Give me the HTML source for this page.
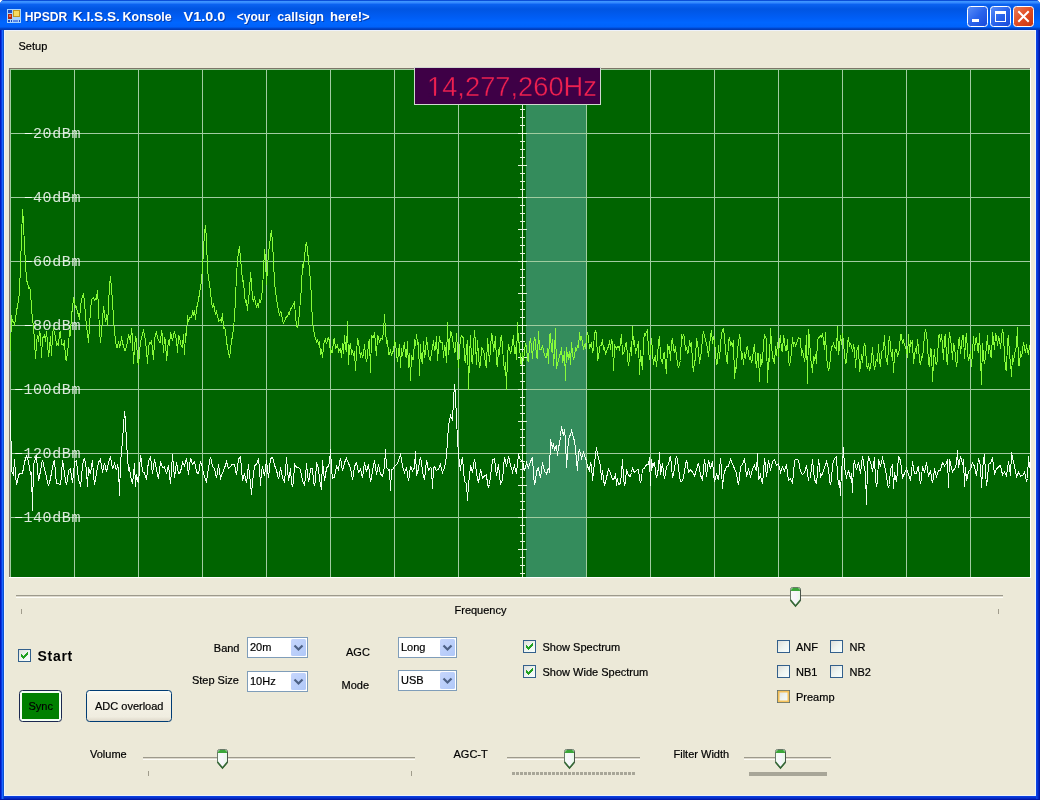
<!DOCTYPE html>
<html><head><meta charset="utf-8"><style>
html,body{margin:0;padding:0;background:#fff;overflow:hidden;width:1040px;height:800px}
svg{display:block;will-change:transform}
text{font-family:"Liberation Sans",sans-serif}
.t{font-size:11px;fill:#000;stroke:#000;stroke-width:0.2px}
.mono{font-family:"Liberation Mono",monospace;font-size:15px;letter-spacing:0.6px;fill:#ffffff;fill-opacity:0.85}
</style></head><body>
<svg width="1040" height="800" viewBox="0 0 1040 800"><g>
<defs>
<linearGradient id="title" x1="0" y1="0" x2="0" y2="30" gradientUnits="userSpaceOnUse">
<stop offset="0" stop-color="#0a4ed8"/>
<stop offset="0.033" stop-color="#0a4ed8"/>
<stop offset="0.05" stop-color="#3d95ff"/>
<stop offset="0.09" stop-color="#3488ff"/>
<stop offset="0.15" stop-color="#0a62f0"/>
<stop offset="0.3" stop-color="#0055e2"/>
<stop offset="0.6" stop-color="#005ef6"/>
<stop offset="0.75" stop-color="#0066ff"/>
<stop offset="0.9" stop-color="#0062fa"/>
<stop offset="0.94" stop-color="#0048d0"/>
<stop offset="1" stop-color="#0038b0"/>
</linearGradient>
<linearGradient id="cbfill" x1="0" y1="0" x2="1" y2="1">
<stop offset="0" stop-color="#dcdcd6"/><stop offset="0.5" stop-color="#eef4f0"/><stop offset="1" stop-color="#f8ffff"/>
</linearGradient>
<linearGradient id="cbtn" x1="0" y1="0" x2="1" y2="1">
<stop offset="0" stop-color="#c6d6fc"/><stop offset="1" stop-color="#b0c8f8"/>
</linearGradient>
<linearGradient id="thumb" x1="0" y1="0" x2="1" y2="0">
<stop offset="0" stop-color="#f4fff4"/><stop offset="0.5" stop-color="#f8f4fc"/><stop offset="1" stop-color="#e4fce4"/>
</linearGradient>
<linearGradient id="btn" x1="0" y1="0" x2="0" y2="1">
<stop offset="0" stop-color="#fdfdf8"/><stop offset="0.15" stop-color="#f6f4ea"/><stop offset="0.85" stop-color="#f0ede0"/><stop offset="1" stop-color="#dcd6c8"/>
</linearGradient>
<linearGradient id="capb" x1="0" y1="0" x2="1" y2="1">
<stop offset="0" stop-color="#5c8ff8"/><stop offset="0.5" stop-color="#2a64ec"/><stop offset="1" stop-color="#1848d8"/>
</linearGradient>
<linearGradient id="capc" x1="0" y1="0" x2="1" y2="1">
<stop offset="0" stop-color="#e8805e"/><stop offset="0.5" stop-color="#e24c22"/><stop offset="1" stop-color="#c83410"/>
</linearGradient>
</defs>
<!-- frame -->
<path d="M0,5 Q0,0 5,0 H1035 Q1040,0 1040,5 V800 H0 Z" fill="#0836d8"/>
<rect x="0" y="30" width="1" height="770" fill="#0018c0"/>
<rect x="1" y="30" width="1" height="770" fill="#0a3ae0"/>
<rect x="2" y="30" width="1" height="770" fill="#1a66ff"/>
<rect x="3" y="30" width="1" height="770" fill="#0c52d0"/>
<rect x="1039" y="30" width="1" height="770" fill="#0018a8"/>
<rect x="1038" y="30" width="1" height="770" fill="#0428c0"/>
<rect x="1037" y="30" width="1" height="770" fill="#0838d8"/>
<rect x="1036" y="30" width="1" height="770" fill="#0a44e4"/>
<rect x="4" y="796" width="1032" height="1" fill="#0a40e0"/>
<rect x="4" y="797" width="1032" height="1" fill="#0834d0"/>
<rect x="4" y="798" width="1032" height="1" fill="#0428c0"/>
<rect x="0" y="799" width="1040" height="1" fill="#0018a8"/>
<path d="M0,5 Q0,0 5,0 H1035 Q1040,0 1040,5 V30 H0 Z" fill="url(#title)"/>
<!-- client -->
<rect x="4" y="30" width="1032" height="766" fill="#eef2fb"/>
<rect x="5" y="31" width="1030" height="764" fill="#ece9d8"/>
<!-- icon -->
<rect x="7" y="9" width="14" height="14" fill="#a8d4fc"/>
<rect x="8" y="10" width="4" height="3" fill="#1a50c8"/>
<rect x="8" y="14" width="4" height="5" fill="#b02810"/>
<rect x="9" y="15" width="2" height="2" fill="#f06848"/>
<rect x="13" y="10" width="7" height="7" fill="#c09820"/>
<rect x="14" y="11" width="5" height="5" fill="#f6dc60"/>
<rect x="8" y="20" width="2" height="2" fill="#1a4ac0"/>
<rect x="11" y="20" width="1" height="2" fill="#1a4ac0"/>
<rect x="13" y="20" width="5" height="2" fill="#5a88e8"/>
<rect x="19" y="20" width="1" height="2" fill="#1a4ac0"/>
<!-- title text -->
<text x="25.85" y="22" font-size="12.5" font-weight="bold" fill="#0a1e70" fill-opacity="0.55" textLength="42.5" lengthAdjust="spacingAndGlyphs">HPSDR</text><text x="73.8" y="22" font-size="12.5" font-weight="bold" fill="#0a1e70" fill-opacity="0.55" textLength="47.1" lengthAdjust="spacingAndGlyphs">K.I.S.S.</text><text x="123.6" y="22" font-size="12.5" font-weight="bold" fill="#0a1e70" fill-opacity="0.55" textLength="49.1" lengthAdjust="spacingAndGlyphs">Konsole</text><text x="184.6" y="22" font-size="12.5" font-weight="bold" fill="#0a1e70" fill-opacity="0.55" textLength="41.8" lengthAdjust="spacingAndGlyphs">V1.0.0</text><text x="237.8" y="22" font-size="12.5" font-weight="bold" fill="#0a1e70" fill-opacity="0.55" textLength="33.1" lengthAdjust="spacingAndGlyphs">&lt;your</text><text x="278.2" y="22" font-size="12.5" font-weight="bold" fill="#0a1e70" fill-opacity="0.55" textLength="46.8" lengthAdjust="spacingAndGlyphs">callsign</text><text x="331" y="22" font-size="12.5" font-weight="bold" fill="#0a1e70" fill-opacity="0.55" textLength="39.8" lengthAdjust="spacingAndGlyphs">here!&gt;</text><text x="24.85" y="21" font-size="12.5" font-weight="bold" fill="#fff" textLength="42.5" lengthAdjust="spacingAndGlyphs">HPSDR</text><text x="72.8" y="21" font-size="12.5" font-weight="bold" fill="#fff" textLength="47.1" lengthAdjust="spacingAndGlyphs">K.I.S.S.</text><text x="122.6" y="21" font-size="12.5" font-weight="bold" fill="#fff" textLength="49.1" lengthAdjust="spacingAndGlyphs">Konsole</text><text x="183.6" y="21" font-size="12.5" font-weight="bold" fill="#fff" textLength="41.8" lengthAdjust="spacingAndGlyphs">V1.0.0</text><text x="236.8" y="21" font-size="12.5" font-weight="bold" fill="#fff" textLength="33.1" lengthAdjust="spacingAndGlyphs">&lt;your</text><text x="277.2" y="21" font-size="12.5" font-weight="bold" fill="#fff" textLength="46.8" lengthAdjust="spacingAndGlyphs">callsign</text><text x="330" y="21" font-size="12.5" font-weight="bold" fill="#fff" textLength="39.8" lengthAdjust="spacingAndGlyphs">here!&gt;</text>
<!-- caption buttons -->
<rect x="967.5" y="6.5" width="20" height="20" rx="3" fill="url(#capb)" stroke="#fff"/>
<rect x="972" y="19" width="7" height="3" fill="#fff"/>
<rect x="990.5" y="6.5" width="20" height="20" rx="3" fill="url(#capb)" stroke="#fff"/>
<rect x="995" y="11" width="11" height="11" fill="none" stroke="#fff" stroke-width="0"/>
<path d="M995,11 h11 v11 h-11 z M996,14 v7 h9 v-7 z" fill="#fff" fill-rule="evenodd"/>
<rect x="1013.5" y="6.5" width="20" height="20" rx="3" fill="url(#capc)" stroke="#fff"/>
<path d="M1019,12 L1028,21 M1028,12 L1019,21" stroke="#fff" stroke-width="2" stroke-linecap="square"/>
<!-- menu -->
<text x="18.5" y="50" class="t">Setup</text>
<!-- spectrum -->
<rect x="9" y="68" width="1022" height="510" fill="#ffffff"/>
<rect x="9" y="68" width="1021" height="509" fill="#7d7668"/>
<rect x="10" y="69" width="1020" height="508" fill="#006400"/>
<rect x="526" y="69" width="60" height="508" fill="#348c5c"/>
<g fill="#a0cca0"><rect x="10" y="69" width="1" height="508"/><rect x="74" y="69" width="1" height="508"/><rect x="138" y="69" width="1" height="508"/><rect x="202" y="69" width="1" height="508"/><rect x="266" y="69" width="1" height="508"/><rect x="330" y="69" width="1" height="508"/><rect x="394" y="69" width="1" height="508"/><rect x="458" y="69" width="1" height="508"/><rect x="522" y="69" width="1" height="508"/><rect x="586" y="69" width="1" height="508"/><rect x="650" y="69" width="1" height="508"/><rect x="714" y="69" width="1" height="508"/><rect x="778" y="69" width="1" height="508"/><rect x="842" y="69" width="1" height="508"/><rect x="906" y="69" width="1" height="508"/><rect x="970" y="69" width="1" height="508"/><rect x="10" y="69" width="1020" height="1"/><rect x="10" y="133" width="1020" height="1"/><rect x="10" y="197" width="1020" height="1"/><rect x="10" y="261" width="1020" height="1"/><rect x="10" y="325" width="1020" height="1"/><rect x="10" y="389" width="1020" height="1"/><rect x="10" y="453" width="1020" height="1"/><rect x="10" y="517" width="1020" height="1"/></g>
<rect x="522" y="69" width="1" height="508" fill="#e4f4dc"/>
<g fill="#e4f4dc"><rect x="518" y="69" width="9" height="1"/><rect x="520" y="77" width="5" height="1"/><rect x="520" y="85" width="5" height="1"/><rect x="520" y="93" width="5" height="1"/><rect x="518" y="101" width="9" height="1"/><rect x="520" y="109" width="5" height="1"/><rect x="520" y="117" width="5" height="1"/><rect x="520" y="125" width="5" height="1"/><rect x="518" y="133" width="9" height="1"/><rect x="520" y="141" width="5" height="1"/><rect x="520" y="149" width="5" height="1"/><rect x="520" y="157" width="5" height="1"/><rect x="518" y="165" width="9" height="1"/><rect x="520" y="173" width="5" height="1"/><rect x="520" y="181" width="5" height="1"/><rect x="520" y="189" width="5" height="1"/><rect x="518" y="197" width="9" height="1"/><rect x="520" y="205" width="5" height="1"/><rect x="520" y="213" width="5" height="1"/><rect x="520" y="221" width="5" height="1"/><rect x="518" y="229" width="9" height="1"/><rect x="520" y="237" width="5" height="1"/><rect x="520" y="245" width="5" height="1"/><rect x="520" y="253" width="5" height="1"/><rect x="518" y="261" width="9" height="1"/><rect x="520" y="269" width="5" height="1"/><rect x="520" y="277" width="5" height="1"/><rect x="520" y="285" width="5" height="1"/><rect x="518" y="293" width="9" height="1"/><rect x="520" y="301" width="5" height="1"/><rect x="520" y="309" width="5" height="1"/><rect x="520" y="317" width="5" height="1"/><rect x="518" y="325" width="9" height="1"/><rect x="520" y="333" width="5" height="1"/><rect x="520" y="341" width="5" height="1"/><rect x="520" y="349" width="5" height="1"/><rect x="518" y="357" width="9" height="1"/><rect x="520" y="365" width="5" height="1"/><rect x="520" y="373" width="5" height="1"/><rect x="520" y="381" width="5" height="1"/><rect x="518" y="389" width="9" height="1"/><rect x="520" y="397" width="5" height="1"/><rect x="520" y="405" width="5" height="1"/><rect x="520" y="413" width="5" height="1"/><rect x="518" y="421" width="9" height="1"/><rect x="520" y="429" width="5" height="1"/><rect x="520" y="437" width="5" height="1"/><rect x="520" y="445" width="5" height="1"/><rect x="518" y="453" width="9" height="1"/><rect x="520" y="461" width="5" height="1"/><rect x="520" y="469" width="5" height="1"/><rect x="520" y="477" width="5" height="1"/><rect x="518" y="485" width="9" height="1"/><rect x="520" y="493" width="5" height="1"/><rect x="520" y="501" width="5" height="1"/><rect x="520" y="509" width="5" height="1"/><rect x="518" y="517" width="9" height="1"/><rect x="520" y="525" width="5" height="1"/><rect x="520" y="533" width="5" height="1"/><rect x="520" y="541" width="5" height="1"/><rect x="518" y="549" width="9" height="1"/><rect x="520" y="557" width="5" height="1"/><rect x="520" y="565" width="5" height="1"/><rect x="520" y="573" width="5" height="1"/></g>
<text x="33.0" y="138" class="mono">20dBm</text><rect x="24.8" y="133" width="7" height="1" fill="#f4fff4"/><text x="33.0" y="202" class="mono">40dBm</text><rect x="24.8" y="197" width="7" height="1" fill="#f4fff4"/><text x="33.0" y="266" class="mono">60dBm</text><rect x="24.8" y="261" width="7" height="1" fill="#f4fff4"/><text x="33.0" y="330" class="mono">80dBm</text><rect x="24.8" y="325" width="7" height="1" fill="#f4fff4"/><text x="23.4" y="394" class="mono">100dBm</text><rect x="15.2" y="389" width="7" height="1" fill="#f4fff4"/><text x="23.4" y="458" class="mono">120dBm</text><rect x="15.2" y="453" width="7" height="1" fill="#f4fff4"/><text x="23.4" y="522" class="mono">140dBm</text><rect x="15.2" y="517" width="7" height="1" fill="#f4fff4"/>
<polyline points="10.5,351.2 11.5,315.3 12.5,321.7 13.5,321.4 14.5,324.2 15.5,319.9 16.5,309.8 17.5,307.4 18.5,298.1 19.5,293.8 20.5,263.1 21.5,239.5 22.5,208.7 23.5,223.6 24.5,246.5 25.5,263.4 26.5,280.8 27.5,281.8 28.5,288.2 29.5,287.4 30.5,290.6 31.5,308.3 32.5,319.0 33.5,327.6 34.5,340.0 35.5,359.0 36.5,343.9 37.5,334.8 38.5,341.5 39.5,331.0 40.5,334.6 41.5,357.5 42.5,338.1 43.5,336.9 44.5,335.1 45.5,341.6 46.5,331.3 47.5,342.7 48.5,357.1 49.5,348.4 50.5,335.6 51.5,356.4 52.5,334.7 53.5,328.4 54.5,334.3 55.5,336.2 56.5,344.8 57.5,343.4 58.5,346.3 59.5,332.8 60.5,331.7 61.5,344.9 62.5,345.0 63.5,345.1 64.5,340.5 65.5,358.9 66.5,359.9 67.5,351.8 68.5,345.3 69.5,330.1 70.5,336.2 71.5,312.7 72.5,310.3 73.5,296.9 74.5,301.9 75.5,307.2 76.5,306.8 77.5,313.4 78.5,313.1 79.5,319.8 80.5,306.1 81.5,299.5 82.5,297.2 83.5,293.6 84.5,302.5 85.5,314.4 86.5,326.8 87.5,332.3 88.5,343.2 89.5,324.9 90.5,310.6 91.5,299.8 92.5,298.7 93.5,297.4 94.5,300.0 95.5,298.7 96.5,299.3 97.5,289.7 98.5,308.2 99.5,330.0 100.5,343.0 101.5,331.0 102.5,320.6 103.5,306.1 104.5,312.8 105.5,322.4 106.5,314.1 107.5,326.4 108.5,304.3 109.5,285.8 110.5,276.3 111.5,290.0 112.5,299.3 113.5,320.5 114.5,332.1 115.5,340.4 116.5,346.9 117.5,347.6 118.5,340.6 119.5,346.9 120.5,345.1 121.5,336.4 122.5,343.5 123.5,345.4 124.5,350.6 125.5,350.8 126.5,345.2 127.5,342.4 128.5,334.0 129.5,337.4 130.5,342.6 131.5,328.0 132.5,338.0 133.5,364.2 134.5,347.7 135.5,336.2 136.5,339.2 137.5,359.8 138.5,365.2 139.5,352.7 140.5,341.9 141.5,337.6 142.5,333.9 143.5,330.7 144.5,334.8 145.5,340.5 146.5,350.8 147.5,363.9 148.5,346.3 149.5,343.1 150.5,343.8 151.5,340.1 152.5,350.0 153.5,360.2 154.5,340.8 155.5,333.8 156.5,332.3 157.5,338.2 158.5,339.6 159.5,342.7 160.5,342.7 161.5,330.0 162.5,336.7 163.5,352.6 164.5,336.8 165.5,340.5 166.5,361.0 167.5,350.3 168.5,339.9 169.5,345.5 170.5,332.6 171.5,336.1 172.5,341.4 173.5,334.0 174.5,331.8 175.5,336.7 176.5,340.0 177.5,352.8 178.5,335.0 179.5,337.2 180.5,343.2 181.5,347.0 182.5,347.1 183.5,334.1 184.5,354.5 185.5,333.0 186.5,336.2 187.5,315.3 188.5,322.3 189.5,318.2 190.5,317.2 191.5,317.4 192.5,311.8 193.5,314.5 194.5,310.4 195.5,319.8 196.5,308.6 197.5,304.5 198.5,299.7 199.5,293.6 200.5,286.0 201.5,281.4 202.5,267.8 203.5,249.8 204.5,233.2 205.5,224.9 206.5,240.6 207.5,269.8 208.5,277.0 209.5,284.1 210.5,292.5 211.5,302.0 212.5,308.4 213.5,304.7 214.5,308.3 215.5,315.3 216.5,312.0 217.5,315.7 218.5,321.0 219.5,320.6 220.5,319.8 221.5,321.9 222.5,312.6 223.5,328.4 224.5,327.8 225.5,330.8 226.5,341.3 227.5,347.5 228.5,351.8 229.5,357.5 230.5,350.6 231.5,340.4 232.5,336.8 233.5,327.3 234.5,318.0 235.5,298.6 236.5,274.9 237.5,260.4 238.5,252.1 239.5,246.1 240.5,259.9 241.5,268.3 242.5,281.1 243.5,280.2 244.5,295.8 245.5,301.9 246.5,300.9 247.5,310.7 248.5,297.8 249.5,292.6 250.5,271.8 251.5,283.9 252.5,297.5 253.5,302.2 254.5,296.5 255.5,302.6 256.5,306.4 257.5,302.8 258.5,308.0 259.5,299.2 260.5,302.5 261.5,297.6 262.5,289.4 263.5,270.4 264.5,249.5 265.5,257.7 266.5,285.2 267.5,267.6 268.5,252.6 269.5,246.2 270.5,236.5 271.5,229.7 272.5,243.3 273.5,259.9 274.5,282.7 275.5,291.4 276.5,298.8 277.5,304.6 278.5,311.1 279.5,314.6 280.5,312.0 281.5,313.2 282.5,320.5 283.5,323.2 284.5,321.3 285.5,319.1 286.5,316.1 287.5,316.3 288.5,313.2 289.5,314.5 290.5,308.3 291.5,308.4 292.5,305.2 293.5,304.5 294.5,301.1 295.5,317.6 296.5,324.7 297.5,328.2 298.5,321.8 299.5,313.0 300.5,298.8 301.5,287.0 302.5,264.1 303.5,266.3 304.5,258.5 305.5,246.4 306.5,241.8 307.5,250.3 308.5,260.6 309.5,269.8 310.5,281.2 311.5,298.4 312.5,324.6 313.5,327.3 314.5,336.1 315.5,337.6 316.5,342.7 317.5,339.1 318.5,345.0 319.5,341.3 320.5,355.2 321.5,349.4 322.5,358.0 323.5,346.2 324.5,340.6 325.5,338.8 326.5,344.4 327.5,339.5 328.5,337.7 329.5,341.2 330.5,354.8 331.5,350.4 332.5,351.7 333.5,340.7 334.5,338.2 335.5,348.8 336.5,347.8 337.5,343.7 338.5,351.9 339.5,350.3 340.5,347.8 341.5,358.1 342.5,342.8 343.5,353.7 344.5,335.5 345.5,347.2 346.5,352.2 347.5,321.5 348.5,364.8 349.5,347.2 350.5,342.9 351.5,354.6 352.5,349.9 353.5,355.9 354.5,351.5 355.5,370.5 356.5,352.1 357.5,339.2 358.5,341.0 359.5,350.6 360.5,356.2 361.5,353.3 362.5,356.7 363.5,355.1 364.5,343.6 365.5,355.7 366.5,361.4 367.5,357.3 368.5,341.8 369.5,339.6 370.5,372.5 371.5,335.7 372.5,336.9 373.5,337.8 374.5,331.7 375.5,344.7 376.5,356.3 377.5,335.8 378.5,336.9 379.5,342.9 380.5,338.7 381.5,338.5 382.5,339.5 383.5,331.3 384.5,314.5 385.5,331.4 386.5,342.6 387.5,340.4 388.5,353.9 389.5,354.7 390.5,349.5 391.5,356.2 392.5,351.1 393.5,351.5 394.5,341.1 395.5,342.4 396.5,352.6 397.5,362.2 398.5,351.9 399.5,344.0 400.5,367.6 401.5,348.0 402.5,356.0 403.5,347.8 404.5,341.6 405.5,355.3 406.5,357.7 407.5,340.9 408.5,367.8 409.5,352.6 410.5,380.5 411.5,354.9 412.5,359.4 413.5,359.7 414.5,338.7 415.5,345.8 416.5,333.6 417.5,343.8 418.5,342.5 419.5,375.5 420.5,343.7 421.5,361.0 422.5,362.6 423.5,341.5 424.5,358.2 425.5,352.5 426.5,337.0 427.5,346.2 428.5,353.4 429.5,359.6 430.5,360.5 431.5,351.1 432.5,348.7 433.5,339.7 434.5,351.2 435.5,348.9 436.5,335.9 437.5,360.7 438.5,348.1 439.5,336.3 440.5,342.6 441.5,342.1 442.5,342.7 443.5,358.1 444.5,345.2 445.5,349.2 446.5,363.0 447.5,322.5 448.5,355.3 449.5,345.3 450.5,331.6 451.5,332.1 452.5,339.4 453.5,344.1 454.5,352.0 455.5,351.7 456.5,333.5 457.5,350.7 458.5,368.4 459.5,350.6 460.5,337.9 461.5,335.5 462.5,337.0 463.5,338.0 464.5,358.3 465.5,363.3 466.5,346.9 467.5,340.3 468.5,389.5 469.5,357.4 470.5,335.1 471.5,360.2 472.5,363.5 473.5,346.7 474.5,330.3 475.5,343.0 476.5,364.6 477.5,339.7 478.5,356.3 479.5,367.1 480.5,365.6 481.5,347.3 482.5,348.2 483.5,352.0 484.5,354.4 485.5,365.5 486.5,367.0 487.5,337.7 488.5,349.8 489.5,361.6 490.5,349.2 491.5,333.8 492.5,335.9 493.5,351.9 494.5,345.3 495.5,336.0 496.5,363.6 497.5,365.6 498.5,349.1 499.5,354.6 500.5,339.9 501.5,334.8 502.5,346.2 503.5,362.4 504.5,369.6 505.5,361.8 506.5,389.5 507.5,355.2 508.5,344.5 509.5,348.7 510.5,353.6 511.5,349.9 512.5,343.0 513.5,335.4 514.5,353.5 515.5,347.2 516.5,360.1 517.5,322.5 518.5,342.5 519.5,342.3 520.5,363.8 521.5,364.0 522.5,352.0 523.5,360.5 524.5,351.1 525.5,343.0 526.5,346.5 527.5,359.7 528.5,362.2 529.5,344.7 530.5,338.4 531.5,347.2 532.5,358.5 533.5,344.3 534.5,337.1 535.5,341.3 536.5,357.5 537.5,358.3 538.5,330.6 539.5,348.9 540.5,349.7 541.5,349.7 542.5,345.0 543.5,351.4 544.5,354.9 545.5,357.5 546.5,357.7 547.5,347.8 548.5,363.6 549.5,335.1 550.5,333.6 551.5,352.0 552.5,339.2 553.5,366.4 554.5,352.1 555.5,328.5 556.5,368.9 557.5,362.6 558.5,361.4 559.5,354.7 560.5,354.4 561.5,347.0 562.5,363.1 563.5,358.3 564.5,350.9 565.5,380.5 566.5,347.0 567.5,355.9 568.5,358.3 569.5,350.8 570.5,364.7 571.5,342.1 572.5,354.1 573.5,359.0 574.5,356.5 575.5,347.3 576.5,351.2 577.5,344.7 578.5,347.8 579.5,331.8 580.5,339.4 581.5,337.3 582.5,341.8 583.5,349.6 584.5,345.3 585.5,348.6 586.5,337.8 587.5,332.4 588.5,337.4 589.5,349.3 590.5,345.5 591.5,342.5 592.5,353.4 593.5,347.8 594.5,333.8 595.5,331.2 596.5,333.7 597.5,360.3 598.5,358.4 599.5,347.4 600.5,345.3 601.5,345.8 602.5,339.2 603.5,350.3 604.5,347.1 605.5,354.9 606.5,351.8 607.5,348.3 608.5,347.0 609.5,340.5 610.5,349.9 611.5,338.7 612.5,342.7 613.5,370.9 614.5,345.5 615.5,347.3 616.5,348.9 617.5,346.2 618.5,347.0 619.5,349.6 620.5,343.0 621.5,334.0 622.5,354.1 623.5,353.2 624.5,350.9 625.5,343.9 626.5,342.6 627.5,357.5 628.5,366.4 629.5,358.7 630.5,346.9 631.5,356.2 632.5,326.5 633.5,344.6 634.5,340.2 635.5,354.2 636.5,348.9 637.5,347.0 638.5,341.1 639.5,374.5 640.5,350.2 641.5,362.1 642.5,370.3 643.5,341.3 644.5,333.7 645.5,335.3 646.5,331.4 647.5,330.1 648.5,350.9 649.5,359.7 650.5,350.4 651.5,338.2 652.5,352.1 653.5,364.7 654.5,358.1 655.5,356.3 656.5,367.4 657.5,355.0 658.5,342.7 659.5,335.6 660.5,356.3 661.5,360.9 662.5,363.0 663.5,354.5 664.5,352.7 665.5,364.4 666.5,373.5 667.5,344.1 668.5,348.7 669.5,346.5 670.5,360.7 671.5,341.9 672.5,338.0 673.5,349.6 674.5,353.0 675.5,345.9 676.5,357.0 677.5,363.3 678.5,368.4 679.5,363.9 680.5,360.5 681.5,334.5 682.5,339.1 683.5,333.7 684.5,337.9 685.5,351.1 686.5,347.3 687.5,353.1 688.5,351.8 689.5,340.4 690.5,345.0 691.5,342.0 692.5,363.6 693.5,372.2 694.5,361.1 695.5,359.7 696.5,337.8 697.5,343.9 698.5,350.6 699.5,363.8 700.5,357.2 701.5,351.2 702.5,337.0 703.5,330.8 704.5,336.8 705.5,339.0 706.5,344.1 707.5,348.4 708.5,357.0 709.5,346.1 710.5,335.7 711.5,330.0 712.5,343.8 713.5,336.6 714.5,341.1 715.5,352.8 716.5,365.4 717.5,362.2 718.5,344.6 719.5,359.4 720.5,345.1 721.5,333.3 722.5,330.2 723.5,328.9 724.5,336.4 725.5,350.8 726.5,359.2 727.5,364.3 728.5,339.4 729.5,338.1 730.5,344.7 731.5,343.1 732.5,346.6 733.5,340.2 734.5,378.5 735.5,367.7 736.5,368.3 737.5,347.6 738.5,344.7 739.5,333.9 740.5,341.0 741.5,359.8 742.5,353.0 743.5,365.3 744.5,352.0 745.5,359.0 746.5,349.1 747.5,345.7 748.5,354.7 749.5,359.5 750.5,355.8 751.5,363.3 752.5,358.3 753.5,350.4 754.5,344.0 755.5,359.9 756.5,368.1 757.5,353.8 758.5,353.7 759.5,381.5 760.5,353.7 761.5,363.6 762.5,361.6 763.5,343.0 764.5,335.2 765.5,336.8 766.5,339.3 767.5,382.5 768.5,359.4 769.5,361.1 770.5,328.5 771.5,343.3 772.5,358.2 773.5,359.1 774.5,364.0 775.5,346.1 776.5,355.8 777.5,342.0 778.5,356.6 779.5,340.7 780.5,335.3 781.5,350.9 782.5,351.4 783.5,334.6 784.5,341.0 785.5,350.2 786.5,350.4 787.5,338.9 788.5,361.3 789.5,364.5 790.5,361.2 791.5,351.6 792.5,337.1 793.5,346.5 794.5,342.1 795.5,345.6 796.5,343.6 797.5,339.8 798.5,337.5 799.5,338.6 800.5,339.0 801.5,355.6 802.5,351.4 803.5,354.1 804.5,361.6 805.5,355.4 806.5,334.9 807.5,383.5 808.5,329.2 809.5,338.2 810.5,357.9 811.5,363.1 812.5,372.6 813.5,356.0 814.5,360.8 815.5,354.0 816.5,363.6 817.5,339.6 818.5,338.8 819.5,336.3 820.5,335.7 821.5,337.2 822.5,333.2 823.5,339.9 824.5,350.3 825.5,331.6 826.5,357.3 827.5,363.6 828.5,371.4 829.5,367.1 830.5,357.2 831.5,346.1 832.5,346.5 833.5,343.5 834.5,347.0 835.5,347.0 836.5,350.6 837.5,326.5 838.5,355.3 839.5,347.6 840.5,335.0 841.5,344.7 842.5,333.1 843.5,343.4 844.5,354.0 845.5,363.1 846.5,362.4 847.5,343.4 848.5,336.6 849.5,346.1 850.5,343.9 851.5,346.0 852.5,351.7 853.5,345.6 854.5,348.0 855.5,368.1 856.5,352.5 857.5,347.8 858.5,346.0 859.5,371.6 860.5,367.3 861.5,354.0 862.5,362.5 863.5,349.7 864.5,343.3 865.5,347.6 866.5,364.6 867.5,369.1 868.5,362.7 869.5,370.8 870.5,367.8 871.5,358.9 872.5,347.4 873.5,362.7 874.5,369.5 875.5,363.9 876.5,358.7 877.5,361.9 878.5,343.9 879.5,361.3 880.5,367.1 881.5,352.1 882.5,350.5 883.5,349.4 884.5,334.7 885.5,357.2 886.5,358.4 887.5,364.9 888.5,345.2 889.5,335.9 890.5,346.0 891.5,356.9 892.5,348.9 893.5,373.3 894.5,353.5 895.5,349.7 896.5,349.8 897.5,356.9 898.5,353.5 899.5,348.5 900.5,334.6 901.5,334.8 902.5,344.0 903.5,340.9 904.5,345.6 905.5,346.9 906.5,350.9 907.5,357.7 908.5,334.5 909.5,352.7 910.5,341.1 911.5,343.1 912.5,341.4 913.5,363.7 914.5,354.0 915.5,350.2 916.5,354.0 917.5,338.7 918.5,348.1 919.5,360.2 920.5,365.4 921.5,356.8 922.5,357.4 923.5,348.3 924.5,334.9 925.5,329.0 926.5,334.2 927.5,343.7 928.5,364.3 929.5,366.1 930.5,348.4 931.5,350.5 932.5,381.5 933.5,361.1 934.5,349.1 935.5,363.7 936.5,364.2 937.5,360.2 938.5,335.9 939.5,334.8 940.5,341.9 941.5,334.1 942.5,346.3 943.5,359.6 944.5,338.4 945.5,333.9 946.5,358.8 947.5,364.6 948.5,344.1 949.5,331.9 950.5,339.7 951.5,346.5 952.5,359.8 953.5,343.3 954.5,346.4 955.5,356.5 956.5,367.2 957.5,359.9 958.5,339.7 959.5,338.0 960.5,354.0 961.5,345.3 962.5,335.7 963.5,335.1 964.5,359.4 965.5,341.3 966.5,332.9 967.5,351.9 968.5,361.3 969.5,357.1 970.5,351.0 971.5,367.4 972.5,351.4 973.5,336.3 974.5,351.1 975.5,339.4 976.5,337.8 977.5,347.7 978.5,353.2 979.5,333.3 980.5,356.5 981.5,384.5 982.5,342.7 983.5,357.6 984.5,364.0 985.5,355.9 986.5,346.6 987.5,334.9 988.5,353.5 989.5,344.9 990.5,354.8 991.5,358.2 992.5,331.7 993.5,339.6 994.5,349.5 995.5,334.1 996.5,335.9 997.5,345.8 998.5,336.0 999.5,339.1 1000.5,348.5 1001.5,337.6 1002.5,329.4 1003.5,335.2 1004.5,355.3 1005.5,368.5 1006.5,370.9 1007.5,340.8 1008.5,335.3 1009.5,356.0 1010.5,361.8 1011.5,376.5 1012.5,354.9 1013.5,362.2 1014.5,354.8 1015.5,350.0 1016.5,345.4 1017.5,327.5 1018.5,365.7 1019.5,365.0 1020.5,350.9 1021.5,357.4 1022.5,350.6 1023.5,342.1 1024.5,348.0 1025.5,352.9 1026.5,344.5 1027.5,351.9 1028.5,354.2 1029.5,345.5" fill="none" stroke="#88fc38" stroke-width="1" shape-rendering="crispEdges"/>
<polyline points="10.5,410.5 11.5,470.5 12.5,473.0 13.5,475.5 14.5,459.0 15.5,474.8 16.5,484.6 17.5,481.1 18.5,475.0 19.5,474.1 20.5,473.2 21.5,473.3 22.5,473.4 23.5,467.8 24.5,462.4 25.5,458.8 26.5,456.0 27.5,458.4 28.5,461.5 29.5,467.6 30.5,474.0 31.5,471.9 32.5,510.5 33.5,465.1 34.5,461.0 35.5,458.6 36.5,456.5 37.5,468.7 38.5,480.8 39.5,476.4 40.5,470.8 41.5,465.1 42.5,460.0 43.5,464.4 44.5,469.3 45.5,473.3 46.5,476.9 47.5,482.4 48.5,485.2 49.5,482.8 50.5,478.3 51.5,472.9 52.5,466.7 53.5,463.1 54.5,459.9 55.5,474.2 56.5,483.8 57.5,483.7 58.5,483.6 59.5,484.1 60.5,484.6 61.5,475.4 62.5,460.0 63.5,466.4 64.5,473.4 65.5,481.0 66.5,485.0 67.5,480.1 68.5,470.3 69.5,469.3 70.5,468.3 71.5,477.0 72.5,482.8 73.5,474.2 74.5,462.0 75.5,461.3 76.5,460.6 77.5,470.4 78.5,479.2 79.5,483.1 80.5,485.3 81.5,478.6 82.5,464.6 83.5,460.9 84.5,457.7 85.5,463.6 86.5,470.7 87.5,486.5 88.5,467.4 89.5,470.9 90.5,474.3 91.5,466.8 92.5,459.7 93.5,475.1 94.5,484.5 95.5,480.2 96.5,472.4 97.5,467.2 98.5,462.1 99.5,460.7 100.5,459.3 101.5,465.7 102.5,472.8 103.5,467.7 104.5,462.8 105.5,467.3 106.5,471.9 107.5,467.3 108.5,462.9 109.5,459.7 110.5,457.1 111.5,462.4 112.5,469.0 113.5,466.3 114.5,463.6 115.5,466.9 116.5,470.3 117.5,465.8 118.5,468.5 119.5,495.5 120.5,462.5 121.5,451.5 122.5,440.5 123.5,426.0 124.5,411.5 125.5,420.5 126.5,442.5 127.5,456.5 128.5,470.5 129.5,467.6 130.5,476.2 131.5,480.6 132.5,483.5 133.5,475.5 134.5,462.9 135.5,486.5 136.5,474.5 137.5,479.7 138.5,483.1 139.5,469.6 140.5,454.9 141.5,461.7 142.5,471.4 143.5,472.2 144.5,472.9 145.5,476.5 146.5,479.6 147.5,470.7 148.5,460.7 149.5,458.7 150.5,456.9 151.5,464.9 152.5,474.4 153.5,466.7 154.5,459.5 155.5,464.3 156.5,469.7 157.5,474.5 158.5,478.6 159.5,470.5 160.5,461.5 161.5,464.4 162.5,467.5 163.5,467.2 164.5,466.9 165.5,470.5 166.5,474.1 167.5,469.6 168.5,465.0 169.5,475.4 170.5,483.5 171.5,470.4 172.5,454.5 173.5,466.5 174.5,477.7 175.5,470.3 176.5,462.3 177.5,468.0 178.5,473.7 179.5,472.9 180.5,472.1 181.5,467.1 182.5,462.3 183.5,464.0 184.5,465.9 185.5,461.7 186.5,458.1 187.5,466.2 188.5,475.2 189.5,465.9 190.5,457.7 191.5,460.7 192.5,464.4 193.5,462.8 194.5,461.4 195.5,466.6 196.5,472.0 197.5,472.9 198.5,473.8 199.5,467.6 200.5,461.5 201.5,464.6 202.5,468.0 203.5,473.0 204.5,477.5 205.5,478.7 206.5,482.5 207.5,474.6 208.5,468.2 209.5,462.0 210.5,457.1 211.5,461.2 212.5,466.2 213.5,467.3 214.5,468.4 215.5,473.6 216.5,478.0 217.5,471.5 218.5,464.2 219.5,471.7 220.5,478.2 221.5,475.7 222.5,472.9 223.5,470.5 224.5,468.1 225.5,464.9 226.5,461.9 227.5,465.1 228.5,468.5 229.5,467.4 230.5,466.4 231.5,465.2 232.5,464.1 233.5,464.2 234.5,464.4 235.5,470.0 236.5,475.3 237.5,466.9 238.5,459.0 239.5,457.8 240.5,456.8 241.5,469.1 242.5,480.9 243.5,477.6 244.5,473.2 245.5,478.9 246.5,482.7 247.5,475.1 248.5,464.1 249.5,475.3 250.5,482.9 251.5,494.5 252.5,481.5 253.5,474.9 254.5,465.9 255.5,465.0 256.5,464.0 257.5,461.7 258.5,459.6 259.5,467.9 260.5,485.5 261.5,471.5 262.5,466.2 263.5,471.2 264.5,475.9 265.5,468.1 266.5,460.5 267.5,469.7 268.5,478.3 269.5,468.5 270.5,458.7 271.5,457.9 272.5,457.2 273.5,460.9 274.5,465.4 275.5,467.6 276.5,469.8 277.5,475.1 278.5,479.4 279.5,474.0 280.5,467.3 281.5,472.7 282.5,477.4 283.5,480.1 284.5,482.1 285.5,470.6 286.5,457.3 287.5,469.6 288.5,481.0 289.5,475.6 290.5,468.5 291.5,482.8 292.5,486.8 293.5,481.8 294.5,464.1 295.5,465.6 296.5,467.2 297.5,467.2 298.5,467.2 299.5,468.3 300.5,469.4 301.5,475.7 302.5,480.6 303.5,483.2 304.5,484.9 305.5,477.3 306.5,462.9 307.5,474.2 308.5,482.4 309.5,476.8 310.5,468.6 311.5,468.5 312.5,468.3 313.5,481.8 314.5,486.4 315.5,480.0 316.5,462.2 317.5,465.3 318.5,468.5 319.5,479.0 320.5,484.6 321.5,489.5 322.5,459.8 323.5,471.0 324.5,480.7 325.5,475.2 326.5,468.0 327.5,467.1 328.5,466.2 329.5,462.1 330.5,449.5 331.5,468.5 332.5,478.4 333.5,477.7 334.5,477.0 335.5,471.7 336.5,465.8 337.5,467.8 338.5,469.7 339.5,463.2 340.5,457.8 341.5,463.8 342.5,471.0 343.5,466.8 344.5,462.7 345.5,460.5 346.5,458.5 347.5,460.9 348.5,463.5 349.5,465.6 350.5,467.8 351.5,474.3 352.5,479.6 353.5,473.8 354.5,466.6 355.5,464.5 356.5,462.6 357.5,467.4 358.5,472.4 359.5,470.6 360.5,468.8 361.5,473.5 362.5,477.6 363.5,470.1 364.5,462.2 365.5,467.0 366.5,471.9 367.5,467.8 368.5,463.8 369.5,474.4 370.5,482.1 371.5,477.3 372.5,470.5 373.5,465.2 374.5,460.5 375.5,467.6 376.5,475.0 377.5,469.6 378.5,464.0 379.5,469.1 380.5,474.1 381.5,475.2 382.5,476.3 383.5,471.9 384.5,467.1 385.5,449.5 386.5,467.2 387.5,468.6 388.5,470.0 389.5,469.6 390.5,490.5 391.5,469.5 392.5,469.7 393.5,467.9 394.5,466.2 395.5,465.8 396.5,465.5 397.5,463.0 398.5,460.6 399.5,457.3 400.5,454.8 401.5,459.5 402.5,466.3 403.5,469.5 404.5,472.7 405.5,470.2 406.5,467.6 407.5,475.2 408.5,481.0 409.5,474.6 410.5,466.2 411.5,468.7 412.5,471.1 413.5,469.4 414.5,467.7 415.5,451.5 416.5,475.7 417.5,472.3 418.5,468.7 419.5,461.9 420.5,456.6 421.5,463.0 422.5,471.0 423.5,476.0 424.5,479.9 425.5,470.5 426.5,459.9 427.5,464.9 428.5,470.4 429.5,468.8 430.5,467.3 431.5,468.2 432.5,488.5 433.5,467.8 434.5,466.5 435.5,468.6 436.5,470.7 437.5,469.8 438.5,468.9 439.5,466.5 440.5,464.2 441.5,469.0 442.5,473.7 443.5,469.2 444.5,468.5 445.5,462.0 446.5,455.5 447.5,440.5 448.5,425.5 449.5,420.5 450.5,415.5 451.5,418.0 452.5,420.5 453.5,400.5 454.5,384.5 455.5,395.5 456.5,420.5 457.5,438.0 458.5,455.5 459.5,463.0 460.5,470.5 461.5,460.3 462.5,458.2 463.5,470.1 464.5,480.9 465.5,482.4 466.5,483.6 467.5,500.5 468.5,484.0 469.5,477.0 470.5,465.1 471.5,468.8 472.5,472.5 473.5,465.0 474.5,458.6 475.5,465.3 476.5,473.0 477.5,478.5 478.5,482.4 479.5,476.9 480.5,468.9 481.5,473.8 482.5,478.1 483.5,477.1 484.5,476.0 485.5,475.3 486.5,474.6 487.5,484.2 488.5,486.9 489.5,484.5 490.5,476.1 491.5,467.8 492.5,459.8 493.5,459.4 494.5,459.0 495.5,467.3 496.5,476.1 497.5,470.0 498.5,463.7 499.5,476.1 500.5,483.7 501.5,482.1 502.5,480.0 503.5,468.3 504.5,456.8 505.5,461.3 506.5,467.2 507.5,461.3 508.5,456.6 509.5,460.3 510.5,464.9 511.5,468.5 512.5,472.0 513.5,468.8 514.5,465.6 515.5,469.7 516.5,473.7 517.5,463.3 518.5,455.5 519.5,457.5 520.5,459.9 521.5,460.3 522.5,460.7 523.5,465.7 524.5,471.1 525.5,466.9 526.5,462.7 527.5,465.3 528.5,468.0 529.5,464.8 530.5,461.7 531.5,459.3 532.5,457.2 533.5,474.2 534.5,484.9 535.5,480.4 536.5,471.5 537.5,469.6 538.5,467.7 539.5,473.3 540.5,478.1 541.5,470.7 542.5,462.4 543.5,466.7 544.5,471.1 545.5,472.6 546.5,474.0 547.5,471.0 548.5,467.7 549.5,472.5 550.5,439.5 551.5,444.5 552.5,447.5 553.5,443.5 554.5,450.5 555.5,446.5 556.5,445.5 557.5,455.5 558.5,447.5 559.5,443.5 560.5,436.5 561.5,426.5 562.5,431.5 563.5,435.5 564.5,429.5 565.5,440.5 566.5,467.5 567.5,452.5 568.5,440.5 569.5,435.5 570.5,435.5 571.5,430.5 572.5,433.5 573.5,438.5 574.5,440.5 575.5,448.5 576.5,460.5 577.5,470.5 578.5,452.5 579.5,450.5 580.5,453.5 581.5,458.5 582.5,455.5 583.5,452.5 584.5,455.5 585.5,458.5 586.5,460.5 587.5,466.5 588.5,468.5 589.5,470.5 590.5,462.5 591.5,465.5 592.5,480.5 593.5,471.5 594.5,462.5 595.5,455.5 596.5,447.5 597.5,453.5 598.5,458.5 599.5,462.0 600.5,465.5 601.5,480.0 602.5,469.9 603.5,479.9 604.5,484.9 605.5,482.2 606.5,477.5 607.5,473.6 608.5,469.2 609.5,471.3 610.5,473.3 611.5,476.6 612.5,479.4 613.5,479.0 614.5,478.6 615.5,472.8 616.5,485.5 617.5,478.4 618.5,484.8 619.5,484.0 620.5,483.1 621.5,473.0 622.5,459.3 623.5,477.9 624.5,486.1 625.5,481.4 626.5,469.2 627.5,472.6 628.5,475.7 629.5,476.0 630.5,476.2 631.5,472.5 632.5,468.3 633.5,470.5 634.5,472.6 635.5,471.4 636.5,470.1 637.5,469.6 638.5,469.2 639.5,477.9 640.5,483.4 641.5,478.0 642.5,469.3 643.5,468.8 644.5,468.2 645.5,466.4 646.5,464.6 647.5,464.5 648.5,464.4 649.5,457.5 650.5,485.5 651.5,458.6 652.5,467.7 653.5,464.9 654.5,462.3 655.5,470.8 656.5,478.4 657.5,473.5 658.5,467.7 659.5,452.5 660.5,475.1 661.5,469.4 662.5,463.5 663.5,472.0 664.5,479.3 665.5,473.8 666.5,467.1 667.5,465.6 668.5,464.1 669.5,459.3 670.5,455.7 671.5,466.2 672.5,478.4 673.5,473.9 674.5,468.7 675.5,461.1 676.5,455.6 677.5,460.7 678.5,467.6 679.5,475.6 680.5,481.5 681.5,481.2 682.5,480.9 683.5,476.5 684.5,470.8 685.5,464.9 686.5,459.6 687.5,465.4 688.5,471.9 689.5,471.0 690.5,470.1 691.5,471.1 692.5,472.1 693.5,474.2 694.5,476.2 695.5,473.0 696.5,469.6 697.5,466.2 698.5,462.9 699.5,469.1 700.5,475.1 701.5,477.7 702.5,480.0 703.5,469.9 704.5,458.9 705.5,467.6 706.5,476.7 707.5,468.2 708.5,459.7 709.5,464.0 710.5,468.8 711.5,464.6 712.5,460.8 713.5,472.8 714.5,482.0 715.5,478.3 716.5,473.2 717.5,477.0 718.5,480.1 719.5,469.6 720.5,458.4 721.5,469.8 722.5,488.5 723.5,476.5 724.5,471.6 725.5,469.3 726.5,467.0 727.5,466.6 728.5,466.2 729.5,462.4 730.5,459.0 731.5,461.5 732.5,464.3 733.5,466.4 734.5,468.5 735.5,471.0 736.5,473.3 737.5,480.7 738.5,484.7 739.5,478.4 740.5,466.4 741.5,465.6 742.5,464.8 743.5,461.4 744.5,458.4 745.5,467.3 746.5,476.8 747.5,472.9 748.5,468.5 749.5,473.2 750.5,477.4 751.5,473.5 752.5,469.1 753.5,467.3 754.5,465.4 755.5,468.3 756.5,471.3 757.5,453.5 758.5,479.7 759.5,477.5 760.5,474.8 761.5,480.6 762.5,484.1 763.5,473.2 764.5,457.6 765.5,466.8 766.5,476.9 767.5,468.6 768.5,460.3 769.5,465.2 770.5,470.5 771.5,465.9 772.5,461.6 773.5,460.6 774.5,459.6 775.5,462.3 776.5,465.4 777.5,464.5 778.5,463.7 779.5,468.0 780.5,472.5 781.5,469.8 782.5,467.0 783.5,468.9 784.5,470.7 785.5,467.4 786.5,464.2 787.5,473.2 788.5,480.4 789.5,479.4 790.5,478.4 791.5,480.8 792.5,482.7 793.5,473.3 794.5,460.5 795.5,459.8 796.5,459.2 797.5,459.6 798.5,460.1 799.5,465.5 800.5,471.5 801.5,473.1 802.5,474.6 803.5,473.7 804.5,472.8 805.5,469.0 806.5,465.2 807.5,473.3 808.5,479.9 809.5,478.5 810.5,477.0 811.5,468.2 812.5,459.5 813.5,469.8 814.5,479.3 815.5,481.6 816.5,483.4 817.5,473.0 818.5,458.8 819.5,467.7 820.5,477.0 821.5,475.3 822.5,473.5 823.5,470.7 824.5,467.7 825.5,464.7 826.5,461.9 827.5,465.0 828.5,468.4 829.5,480.0 830.5,485.4 831.5,478.9 832.5,464.9 833.5,461.3 834.5,458.2 835.5,457.6 836.5,457.0 837.5,474.3 838.5,485.0 839.5,480.2 840.5,495.5 841.5,467.8 842.5,464.9 843.5,447.5 844.5,467.4 845.5,472.4 846.5,476.9 847.5,473.7 848.5,470.1 849.5,474.8 850.5,478.7 851.5,473.3 852.5,492.5 853.5,464.0 854.5,461.4 855.5,465.7 856.5,470.3 857.5,466.1 858.5,462.1 859.5,468.2 860.5,474.4 861.5,464.5 862.5,456.4 863.5,462.3 864.5,470.0 865.5,472.7 866.5,504.5 867.5,465.6 868.5,457.3 869.5,459.5 870.5,462.0 871.5,466.6 872.5,471.5 873.5,463.8 874.5,457.4 875.5,479.7 876.5,486.8 877.5,480.6 878.5,459.4 879.5,462.7 880.5,466.5 881.5,461.7 882.5,457.8 883.5,461.3 884.5,465.5 885.5,470.4 886.5,475.1 887.5,485.4 888.5,487.2 889.5,484.5 890.5,468.5 891.5,466.9 892.5,465.4 893.5,488.5 894.5,471.7 895.5,477.9 896.5,482.2 897.5,470.2 898.5,456.6 899.5,458.4 900.5,460.4 901.5,469.3 902.5,477.9 903.5,475.7 904.5,473.3 905.5,471.0 906.5,468.5 907.5,471.4 908.5,474.2 909.5,477.9 910.5,480.8 911.5,472.0 912.5,461.4 913.5,467.5 914.5,473.8 915.5,473.4 916.5,473.0 917.5,469.4 918.5,465.7 919.5,477.3 920.5,484.1 921.5,477.4 922.5,465.9 923.5,469.4 924.5,472.9 925.5,467.5 926.5,462.2 927.5,469.5 928.5,476.5 929.5,473.6 930.5,470.5 931.5,478.0 932.5,482.9 933.5,477.2 934.5,468.6 935.5,472.8 936.5,476.7 937.5,473.6 938.5,470.3 939.5,470.2 940.5,470.1 941.5,466.4 942.5,462.8 943.5,464.2 944.5,465.7 945.5,464.4 946.5,463.0 947.5,458.8 948.5,487.5 949.5,458.9 950.5,463.5 951.5,467.6 952.5,471.9 953.5,470.4 954.5,468.9 955.5,466.5 956.5,464.2 957.5,450.5 958.5,468.3 959.5,461.6 960.5,456.5 961.5,460.1 962.5,464.6 963.5,458.7 964.5,486.5 965.5,467.0 966.5,480.9 967.5,476.8 968.5,471.5 969.5,470.6 970.5,469.6 971.5,466.1 972.5,462.9 973.5,464.5 974.5,466.3 975.5,471.2 976.5,475.8 977.5,466.8 978.5,458.5 979.5,461.9 980.5,465.8 981.5,487.5 982.5,470.3 983.5,460.2 984.5,453.8 985.5,473.0 986.5,485.7 987.5,479.4 988.5,464.6 989.5,463.8 990.5,463.0 991.5,460.4 992.5,458.1 993.5,465.8 994.5,474.6 995.5,471.8 996.5,468.9 997.5,467.9 998.5,466.8 999.5,466.0 1000.5,465.2 1001.5,470.1 1002.5,474.8 1003.5,473.6 1004.5,472.3 1005.5,474.3 1006.5,476.2 1007.5,468.7 1008.5,461.1 1009.5,468.6 1010.5,476.0 1011.5,452.5 1012.5,458.0 1013.5,461.9 1014.5,466.5 1015.5,471.9 1016.5,476.8 1017.5,474.7 1018.5,472.4 1019.5,474.3 1020.5,476.1 1021.5,475.8 1022.5,475.6 1023.5,473.8 1024.5,471.9 1025.5,476.8 1026.5,480.6 1027.5,478.5 1028.5,456.1 1029.5,467.8" fill="none" stroke="#f4fff4" stroke-width="1" shape-rendering="crispEdges"/>
<rect x="414.5" y="67.5" width="186" height="37" fill="#3e0046" stroke="#d0d8d0"/>
<text x="427" y="96" font-size="27.3" fill="#ee2050" stroke="#3e0046" stroke-width="0.45">14,277,260Hz</text>
<rect x="429" y="93.6" width="5" height="2.6" fill="#3e0046"/><rect x="436" y="93.6" width="6" height="2.6" fill="#3e0046"/>
<!-- frequency slider -->
<rect x="16" y="595" width="987" height="1" fill="#9d9a8c"/><rect x="16" y="596" width="987" height="1" fill="#ddd9cc"/><rect x="16" y="597" width="987" height="1" fill="#fdfdf8"/>
<rect x="21" y="609" width="1" height="5" fill="#a09c8c"/>
<rect x="998" y="609" width="1" height="5" fill="#a09c8c"/>
<path d="M790.5,589.5 q0,-2 2,-2 h6 q2,0 2,2 v11 l-5,6 l-5,-6 z" fill="url(#thumb)" stroke="#6a7a6a" stroke-width="1"/><path d="M790.5,600 l5,6 l5,-6" fill="none" stroke="#356835" stroke-width="1.6"/><path d="M800.5,589.5 v11" fill="none" stroke="#4a544a" stroke-width="1"/><path d="M791,590.5 q0,-2.5 2,-2.5 h5 q2,0 2,2.5 v0.5 h-9 z" fill="#3aa63a"/>
<text x="454.5" y="614" class="t">Frequency</text>
<!-- start -->
<rect x="18.5" y="649.5" width="12" height="12" fill="url(#cbfill)" stroke="#33608c"/><rect x="27" y="652" width="1" height="1" fill="#21a121"/><rect x="26" y="653" width="1" height="1" fill="#21a121"/><rect x="27" y="653" width="1" height="1" fill="#21a121"/><rect x="21" y="654" width="1" height="1" fill="#21a121"/><rect x="25" y="654" width="1" height="1" fill="#21a121"/><rect x="26" y="654" width="1" height="1" fill="#21a121"/><rect x="27" y="654" width="1" height="1" fill="#21a121"/><rect x="21" y="655" width="1" height="1" fill="#21a121"/><rect x="22" y="655" width="1" height="1" fill="#21a121"/><rect x="24" y="655" width="1" height="1" fill="#21a121"/><rect x="25" y="655" width="1" height="1" fill="#21a121"/><rect x="26" y="655" width="1" height="1" fill="#21a121"/><rect x="21" y="656" width="1" height="1" fill="#21a121"/><rect x="22" y="656" width="1" height="1" fill="#21a121"/><rect x="23" y="656" width="1" height="1" fill="#21a121"/><rect x="24" y="656" width="1" height="1" fill="#21a121"/><rect x="25" y="656" width="1" height="1" fill="#21a121"/><rect x="22" y="657" width="1" height="1" fill="#21a121"/><rect x="23" y="657" width="1" height="1" fill="#21a121"/><rect x="24" y="657" width="1" height="1" fill="#21a121"/><rect x="23" y="658" width="1" height="1" fill="#21a121"/>
<text x="37.5" y="661" font-size="14" font-weight="bold" letter-spacing="0.7">Start</text>
<!-- sync -->
<rect x="19.5" y="690.5" width="42" height="31" rx="3" fill="#f4fff4" stroke="#1c2850"/>
<rect x="22" y="693" width="37" height="26" fill="#008000"/>
<text x="28.5" y="710" class="t" fill="#0a2a0a">Sync</text>
<!-- adc -->
<rect x="86.5" y="690.5" width="85" height="31" rx="3" fill="url(#btn)" stroke="#003c74"/>
<text x="95" y="710" class="t">ADC overload</text>
<!-- labels -->
<text x="239.5" y="652" class="t" text-anchor="end">Band</text>
<text x="239" y="684" class="t" text-anchor="end">Step Size</text>
<text x="346" y="656" class="t">AGC</text>
<text x="341.5" y="689" class="t">Mode</text>
<rect x="247.5" y="637.5" width="60" height="20" fill="#fff" stroke="#7f9db9"/><rect x="291" y="639" width="15" height="17" rx="1.5" fill="url(#cbtn)"/><path d="M294.5,645.5 l4,4 l4,-4" fill="none" stroke="#4d6185" stroke-width="2.2"/><text x="250" y="651" class="t">20m</text>
<rect x="247.5" y="671.5" width="60" height="20" fill="#fff" stroke="#7f9db9"/><rect x="291" y="673" width="15" height="17" rx="1.5" fill="url(#cbtn)"/><path d="M294.5,679.5 l4,4 l4,-4" fill="none" stroke="#4d6185" stroke-width="2.2"/><text x="250" y="685" class="t">10Hz</text>
<rect x="398.5" y="637.5" width="58" height="20" fill="#fff" stroke="#7f9db9"/><rect x="440" y="639" width="15" height="17" rx="1.5" fill="url(#cbtn)"/><path d="M443.5,645.5 l4,4 l4,-4" fill="none" stroke="#4d6185" stroke-width="2.2"/><text x="401" y="651" class="t">Long</text>
<rect x="398.5" y="670.5" width="58" height="20" fill="#fff" stroke="#7f9db9"/><rect x="440" y="672" width="15" height="17" rx="1.5" fill="url(#cbtn)"/><path d="M443.5,678.5 l4,4 l4,-4" fill="none" stroke="#4d6185" stroke-width="2.2"/><text x="401" y="684" class="t">USB</text>
<rect x="523.5" y="640.5" width="12" height="12" fill="url(#cbfill)" stroke="#33608c"/><rect x="532" y="643" width="1" height="1" fill="#21a121"/><rect x="531" y="644" width="1" height="1" fill="#21a121"/><rect x="532" y="644" width="1" height="1" fill="#21a121"/><rect x="526" y="645" width="1" height="1" fill="#21a121"/><rect x="530" y="645" width="1" height="1" fill="#21a121"/><rect x="531" y="645" width="1" height="1" fill="#21a121"/><rect x="532" y="645" width="1" height="1" fill="#21a121"/><rect x="526" y="646" width="1" height="1" fill="#21a121"/><rect x="527" y="646" width="1" height="1" fill="#21a121"/><rect x="529" y="646" width="1" height="1" fill="#21a121"/><rect x="530" y="646" width="1" height="1" fill="#21a121"/><rect x="531" y="646" width="1" height="1" fill="#21a121"/><rect x="526" y="647" width="1" height="1" fill="#21a121"/><rect x="527" y="647" width="1" height="1" fill="#21a121"/><rect x="528" y="647" width="1" height="1" fill="#21a121"/><rect x="529" y="647" width="1" height="1" fill="#21a121"/><rect x="530" y="647" width="1" height="1" fill="#21a121"/><rect x="527" y="648" width="1" height="1" fill="#21a121"/><rect x="528" y="648" width="1" height="1" fill="#21a121"/><rect x="529" y="648" width="1" height="1" fill="#21a121"/><rect x="528" y="649" width="1" height="1" fill="#21a121"/>
<text x="542.5" y="651" class="t">Show Spectrum</text>
<rect x="523.5" y="665.5" width="12" height="12" fill="url(#cbfill)" stroke="#33608c"/><rect x="532" y="668" width="1" height="1" fill="#21a121"/><rect x="531" y="669" width="1" height="1" fill="#21a121"/><rect x="532" y="669" width="1" height="1" fill="#21a121"/><rect x="526" y="670" width="1" height="1" fill="#21a121"/><rect x="530" y="670" width="1" height="1" fill="#21a121"/><rect x="531" y="670" width="1" height="1" fill="#21a121"/><rect x="532" y="670" width="1" height="1" fill="#21a121"/><rect x="526" y="671" width="1" height="1" fill="#21a121"/><rect x="527" y="671" width="1" height="1" fill="#21a121"/><rect x="529" y="671" width="1" height="1" fill="#21a121"/><rect x="530" y="671" width="1" height="1" fill="#21a121"/><rect x="531" y="671" width="1" height="1" fill="#21a121"/><rect x="526" y="672" width="1" height="1" fill="#21a121"/><rect x="527" y="672" width="1" height="1" fill="#21a121"/><rect x="528" y="672" width="1" height="1" fill="#21a121"/><rect x="529" y="672" width="1" height="1" fill="#21a121"/><rect x="530" y="672" width="1" height="1" fill="#21a121"/><rect x="527" y="673" width="1" height="1" fill="#21a121"/><rect x="528" y="673" width="1" height="1" fill="#21a121"/><rect x="529" y="673" width="1" height="1" fill="#21a121"/><rect x="528" y="674" width="1" height="1" fill="#21a121"/>
<text x="542.5" y="676" class="t">Show Wide Spectrum</text>
<rect x="777.5" y="640.5" width="12" height="12" fill="url(#cbfill)" stroke="#33608c"/>
<text x="796" y="651" class="t">ANF</text>
<rect x="830.5" y="640.5" width="12" height="12" fill="url(#cbfill)" stroke="#33608c"/>
<text x="849.5" y="651" class="t">NR</text>
<rect x="777.5" y="665.5" width="12" height="12" fill="url(#cbfill)" stroke="#33608c"/>
<text x="796" y="676" class="t">NB1</text>
<rect x="830.5" y="665.5" width="12" height="12" fill="url(#cbfill)" stroke="#33608c"/>
<text x="849.5" y="676" class="t">NB2</text>
<rect x="777.5" y="690.5" width="12" height="12" fill="url(#cbfill)" stroke="#33608c"/><rect x="778.5" y="691.5" width="10" height="10" fill="none" stroke="#f8b636" stroke-width="2" opacity="0.8"/>
<text x="796" y="700.5" class="t">Preamp</text>
<!-- bottom sliders -->
<text x="90" y="758" class="t">Volume</text>
<rect x="143" y="757" width="272" height="1" fill="#9d9a8c"/><rect x="143" y="758" width="272" height="1" fill="#ddd9cc"/><rect x="143" y="759" width="272" height="1" fill="#fdfdf8"/>
<rect x="148" y="771" width="1" height="5" fill="#a09c8c"/>
<rect x="411" y="771" width="1" height="5" fill="#a09c8c"/>
<path d="M217.5,751.5 q0,-2 2,-2 h6 q2,0 2,2 v11 l-5,6 l-5,-6 z" fill="url(#thumb)" stroke="#6a7a6a" stroke-width="1"/><path d="M217.5,762 l5,6 l5,-6" fill="none" stroke="#356835" stroke-width="1.6"/><path d="M227.5,751.5 v11" fill="none" stroke="#4a544a" stroke-width="1"/><path d="M218,752.5 q0,-2.5 2,-2.5 h5 q2,0 2,2.5 v0.5 h-9 z" fill="#3aa63a"/>
<text x="453.5" y="758" class="t">AGC-T</text>
<rect x="507" y="757" width="133" height="1" fill="#9d9a8c"/><rect x="507" y="758" width="133" height="1" fill="#ddd9cc"/><rect x="507" y="759" width="133" height="1" fill="#fdfdf8"/>

<g fill="#a8a698"><rect x="512" y="772" width="3" height="3"/><rect x="516" y="772" width="3" height="3"/><rect x="520" y="772" width="3" height="3"/><rect x="524" y="772" width="3" height="3"/><rect x="528" y="772" width="3" height="3"/><rect x="532" y="772" width="3" height="3"/><rect x="536" y="772" width="3" height="3"/><rect x="540" y="772" width="3" height="3"/><rect x="544" y="772" width="3" height="3"/><rect x="548" y="772" width="3" height="3"/><rect x="552" y="772" width="3" height="3"/><rect x="556" y="772" width="3" height="3"/><rect x="560" y="772" width="3" height="3"/><rect x="564" y="772" width="3" height="3"/><rect x="568" y="772" width="3" height="3"/><rect x="572" y="772" width="3" height="3"/><rect x="576" y="772" width="3" height="3"/><rect x="580" y="772" width="3" height="3"/><rect x="584" y="772" width="3" height="3"/><rect x="588" y="772" width="3" height="3"/><rect x="592" y="772" width="3" height="3"/><rect x="596" y="772" width="3" height="3"/><rect x="600" y="772" width="3" height="3"/><rect x="604" y="772" width="3" height="3"/><rect x="608" y="772" width="3" height="3"/><rect x="612" y="772" width="3" height="3"/><rect x="616" y="772" width="3" height="3"/><rect x="620" y="772" width="3" height="3"/><rect x="624" y="772" width="3" height="3"/><rect x="628" y="772" width="3" height="3"/><rect x="632" y="772" width="3" height="3"/></g>
<path d="M564.5,751.5 q0,-2 2,-2 h6 q2,0 2,2 v11 l-5,6 l-5,-6 z" fill="url(#thumb)" stroke="#6a7a6a" stroke-width="1"/><path d="M564.5,762 l5,6 l5,-6" fill="none" stroke="#356835" stroke-width="1.6"/><path d="M574.5,751.5 v11" fill="none" stroke="#4a544a" stroke-width="1"/><path d="M565,752.5 q0,-2.5 2,-2.5 h5 q2,0 2,2.5 v0.5 h-9 z" fill="#3aa63a"/>
<text x="673.5" y="758" class="t">Filter Width</text>
<rect x="744" y="757" width="87" height="1" fill="#9d9a8c"/><rect x="744" y="758" width="87" height="1" fill="#ddd9cc"/><rect x="744" y="759" width="87" height="1" fill="#fdfdf8"/>
<rect x="749" y="772" width="78" height="4" fill="#a8a698"/>
<path d="M775.5,751.5 q0,-2 2,-2 h6 q2,0 2,2 v11 l-5,6 l-5,-6 z" fill="url(#thumb)" stroke="#6a7a6a" stroke-width="1"/><path d="M775.5,762 l5,6 l5,-6" fill="none" stroke="#356835" stroke-width="1.6"/><path d="M785.5,751.5 v11" fill="none" stroke="#4a544a" stroke-width="1"/><path d="M776,752.5 q0,-2.5 2,-2.5 h5 q2,0 2,2.5 v0.5 h-9 z" fill="#3aa63a"/>
</g></svg>
</body></html>
